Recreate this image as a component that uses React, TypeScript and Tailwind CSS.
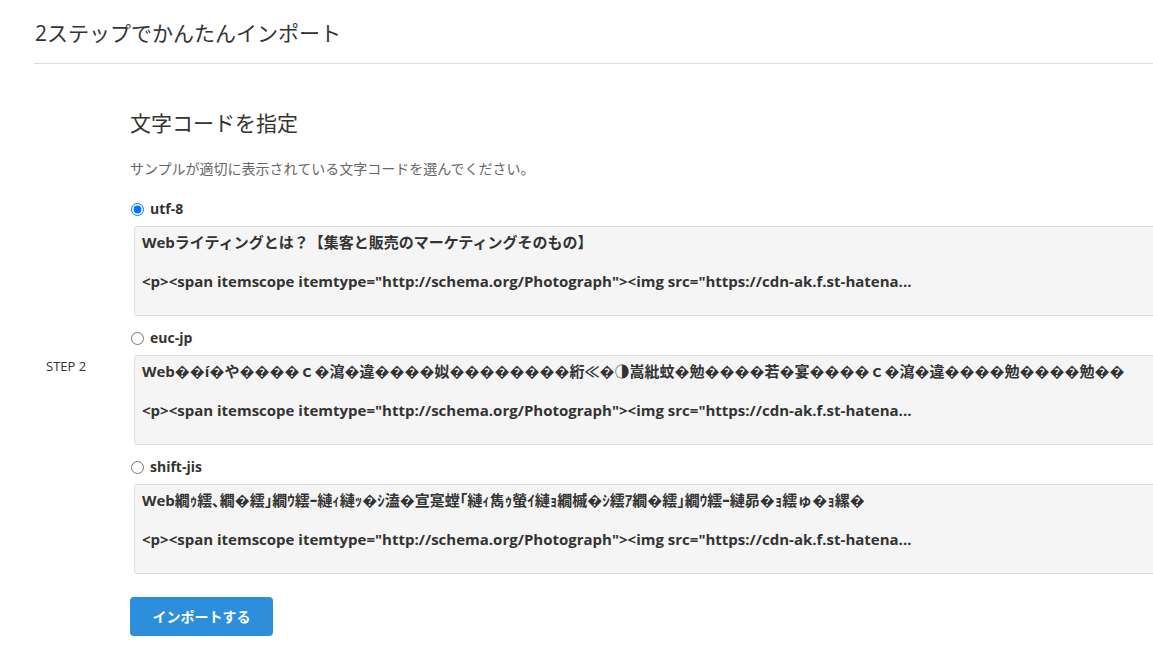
import React from "react";

const line2 = '<p><span itemscope itemtype="http://schema.org/Photograph"><img src="https://cdn-ak.f.st-hatena...';
const opts = [
  { name: "utf-8", checked: true, title: "Webライティングとは？【集客と販売のマーケティングそのもの】" },
  { name: "euc-jp", checked: false, title: "Web��í�や����ｃ�瀉�違����姒��������絎≪�◑嵩紕蚊�勉����若�宴����ｃ�瀉�違����勉����勉��" },
  { name: "shift-jis", checked: false, title: "Web繝ｩ繧､繝�繧｣繝ｳ繧ｰ縺ｨ縺ｯ�ｼ溘�宣寔螳｢縺ｨ雋ｩ螢ｲ縺ｮ繝槭�ｼ繧ｱ繝�繧｣繝ｳ繧ｰ縺昴�ｮ繧ゅ�ｮ縲�" },
];

export default function App() {
  return (
    <div className="w-[1153px] h-[667px] overflow-hidden bg-white text-[#333]" style={{ fontFamily: '"Open Sans","Noto Sans CJK JP",sans-serif' }}>
      <div className="pl-[34px]">
        <h1 className="text-[21px] pt-[17px] pb-[14px] pl-[1px] leading-[32px] text-[#333]">2ステップでかんたんインポート</h1>
        <div className="border-t border-[#ddd]" />
      </div>
      <div className="flex">
        <div className="w-[130px] shrink-0 flex items-center pl-[46px] text-[13px] pt-[34px]">STEP 2</div>
        <div className="flex-1 min-w-0">
          <h2 className="text-[21px] mt-[44px] leading-[30px]">文字コードを指定</h2>
          <p className="text-[14px] text-[#666] mt-[21px] leading-[20px]">サンプルが適切に表示されている文字コードを選んでください。</p>
          {opts.map((o, i) => (
            <div key={o.name} className={i === 0 ? "mt-[20px]" : "mt-[12px]"}>
              <label className="flex items-center gap-[6px] text-[14px] font-bold leading-[20px] pl-[1px]">
                <input type="radio" name="enc" defaultChecked={o.checked} className="w-[13px] h-[13px] m-0" />
                {o.name}
              </label>
              <div className="ml-[4px] mt-[7px] w-[1100px] h-[90px] bg-[#f5f5f5] border border-[#ddd] rounded-[3px] px-[7px] pt-[5px] text-[15px] font-bold leading-[20px] whitespace-nowrap overflow-hidden">
                <div>{o.title}</div>
                <div className="mt-[19px]">{line2}</div>
              </div>
            </div>
          ))}
          <button className="mt-[23px] bg-[#2d8fdc] text-white text-[14px] font-bold rounded-[4px] w-[143px] h-[39px]">インポートする</button>
        </div>
      </div>
    </div>
  );
}
